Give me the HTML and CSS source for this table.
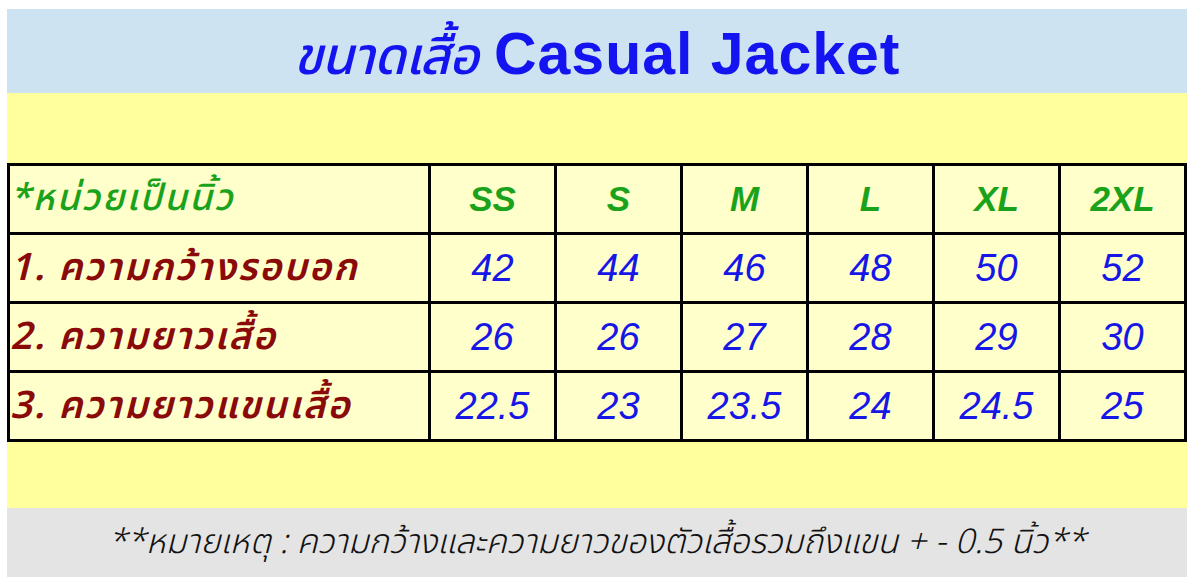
FILE: index.html
```html
<!DOCTYPE html>
<html lang="th">
<head>
<meta charset="utf-8">
<title>ขนาดเสื้อ Casual Jacket</title>
<link rel="stylesheet" href="styles.css">
</head>
<body>
<div class="sheet">
  <header class="title-band">
    <h1 class="title"><span class="title-th">ขนาดเสื้อ</span><span class="title-en">Casual Jacket</span></h1>
  </header>
  <section class="yellow-band">
    <div class="size-grid">
      <div class="cell head label">*หน่วยเป็นนิ้ว</div>
      <div class="cell head">SS</div>
      <div class="cell head">S</div>
      <div class="cell head">M</div>
      <div class="cell head">L</div>
      <div class="cell head">XL</div>
      <div class="cell head">2XL</div>

      <div class="cell row-label label">1. ความกว้างรอบอก</div>
      <div class="cell num">42</div>
      <div class="cell num">44</div>
      <div class="cell num">46</div>
      <div class="cell num">48</div>
      <div class="cell num">50</div>
      <div class="cell num">52</div>

      <div class="cell row-label label">2. ความยาวเสื้อ</div>
      <div class="cell num">26</div>
      <div class="cell num">26</div>
      <div class="cell num">27</div>
      <div class="cell num">28</div>
      <div class="cell num">29</div>
      <div class="cell num">30</div>

      <div class="cell row-label label">3. ความยาวแขนเสื้อ</div>
      <div class="cell num">22.5</div>
      <div class="cell num">23</div>
      <div class="cell num">23.5</div>
      <div class="cell num">24</div>
      <div class="cell num">24.5</div>
      <div class="cell num">25</div>
    </div>
  </section>
  <footer class="note-band">
    <p class="note">**หมายเหตุ : ความกว้างและความยาวของตัวเสื้อรวมถึงแขน + - 0.5 นิ้ว**</p>
  </footer>
</div>
</body>
</html>
```
FILE: styles.css
```css
html, body {
  margin: 0;
  padding: 0;
  background: #ffffff;
}

.sheet {
  width: 1180px;
  margin: 0 0 0 7px;
  padding-top: 9px;
  font-family: "Noto Sans Thai", "Noto Sans", "Liberation Sans", sans-serif;
}

.title-band {
  height: 84px;
  background: #cde3f2;
  display: flex;
  align-items: center;
  justify-content: center;
}

.title {
  margin: 0;
  color: #1414f0;
  font-weight: 700;
  line-height: 1;
  white-space: nowrap;
  padding: 6px 0 0 0;
  display: flex;
  align-items: baseline;
  gap: 16px;
}

.title-th {
  font-size: 52px;
  font-style: italic;
  font-weight: 500;
  letter-spacing: -1px;
}

.title-en {
  font-family: "Liberation Sans", sans-serif;
  font-size: 59px;
  font-weight: 700;
  letter-spacing: 1px;
}

.yellow-band {
  background: #ffff9e;
  padding: 70px 0 66px;
}

.size-grid {
  display: grid;
  grid-template-columns: 418px repeat(6, 123px);
  grid-auto-rows: 66px;
  gap: 3px;
  padding: 3px;
  background: #000000;
  width: max-content;
}

.cell {
  background: #ffffcc;
  display: flex;
  align-items: center;
  justify-content: center;
  white-space: nowrap;
  overflow: hidden;
}

.cell.label {
  justify-content: flex-start;
  padding-left: 0;
}

.head {
  color: #1ba21b;
  font-family: "Liberation Sans", "Noto Sans Thai", sans-serif;
  font-size: 35px;
  font-weight: 700;
  font-style: italic;
}

.head.label {
  font-family: "Noto Sans Thai", "Noto Sans", sans-serif;
  font-size: 37px;
  font-weight: 500;
  letter-spacing: 2px;
}

.row-label {
  color: #8a0a0a;
  font-size: 38px;
  font-weight: 600;
  font-style: italic;
  letter-spacing: 2px;
}

.num {
  color: #1616e6;
  font-family: "Liberation Sans", sans-serif;
  font-size: 38px;
  font-style: italic;
}

.note-band {
  height: 69px;
  background: #e4e4e4;
  display: flex;
  align-items: center;
  justify-content: center;
}

.note {
  margin: 0;
  color: #111111;
  font-size: 34px;
  font-style: italic;
  font-weight: 300;
  white-space: nowrap;
}
```
